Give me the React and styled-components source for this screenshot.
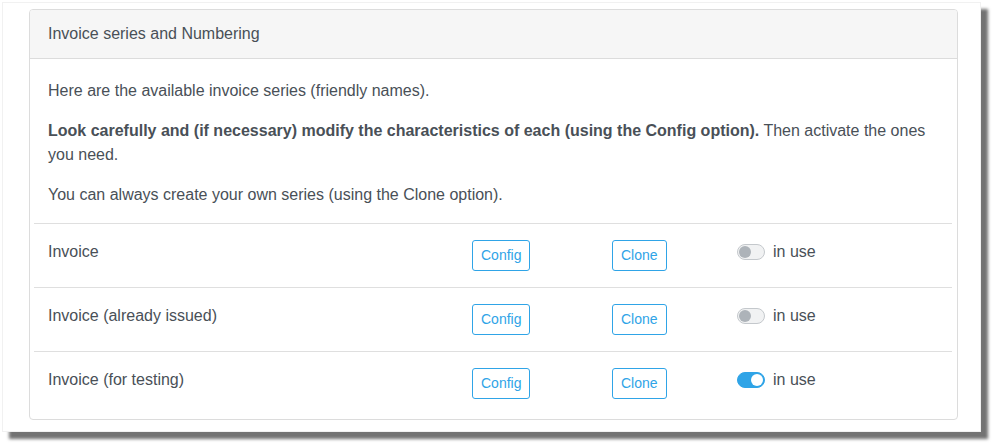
import React from "react";
import styled, { createGlobalStyle } from "styled-components";

const Global = createGlobalStyle`
  html, body { margin: 0; padding: 0; background: #fff; }
  body {
    font-family: "Liberation Sans", Arial, Helvetica, sans-serif;
    color: #495057;
    min-height: 443px;
  }
  * { box-sizing: border-box; }
`;

const Frame = styled.div`
  margin: 2px 0 11px 2px;
  width: 979px;
  height: 430px;
  background: #fff;
  border: 1px solid #f1f1f1;
  box-shadow: 7px 7px 3px rgba(0, 0, 0, 0.55);
  padding: 6px 0 0 26px;
`;

const Panel = styled.section`
  width: 929px;
  border: 1px solid #dcdcdc;
  border-radius: 4px;
  background: #fff;
  overflow: hidden;
`;

const Header = styled.header`
  background: #f6f6f6;
  border-bottom: 1px solid #dcdcdc;
  height: 49px;
  padding: 0 18px;
  display: flex;
  align-items: center;
  font-size: 16px;
  color: #495057;
`;

const Body = styled.div`
  padding: 20px 5px 4px 4px;
`;

const Para = styled.p`
  margin: 0 0 16px;
  padding: 0 14px;
  font-size: 16px;
  line-height: 24px;
  b { font-weight: bold; }
`;

const Row = styled.div`
  display: grid;
  grid-template-columns: 424px 140px 125px 1fr;
  border-top: 1px solid #dfdfdf;
`;

const Cell = styled.div`
  padding: 16px 14px;
  font-size: 16px;
  line-height: 24px;
  display: flex;
  align-items: flex-start;
  gap: 8px;
`;

const Btn = styled.button`
  font-family: inherit;
  font-size: 14px;
  line-height: 21px;
  padding: 4px 8px;
  background: #fff;
  color: #2fa4e7;
  border: 1px solid #2fa4e7;
  border-radius: 3px;
  cursor: pointer;
`;

const Toggle = styled.span`
  position: relative;
  display: inline-block;
  width: 28px;
  height: 16px;
  margin-top: 4px;
  border-radius: 8px;
  border: 1px solid ${(p) => (p.$on ? "#2fa4e7" : "#c4c8cc")};
  background: ${(p) => (p.$on ? "#2fa4e7" : "#f1f2f3")};
  &::after {
    content: "";
    position: absolute;
    top: 1px;
    left: ${(p) => (p.$on ? "13px" : "1px")};
    width: 12px;
    height: 12px;
    border-radius: 50%;
    background: ${(p) => (p.$on ? "#fff" : "#adb3b9")};
  }
`;

const series = [
  { name: "Invoice", on: false },
  { name: "Invoice (already issued)", on: false },
  { name: "Invoice (for testing)", on: true },
];

export default function App() {
  return (
    <>
      <Global />
      <Frame>
        <Panel>
          <Header>Invoice series and Numbering</Header>
          <Body>
            <Para>Here are the available invoice series (friendly names).</Para>
            <Para>
              <b>Look carefully and (if necessary) modify the characteristics of each (using the Config option).</b>{" "}
              Then activate the ones you need.
            </Para>
            <Para>You can always create your own series (using the Clone option).</Para>
            {series.map((s) => (
              <Row key={s.name}>
                <Cell>{s.name}</Cell>
                <Cell>
                  <Btn>Config</Btn>
                </Cell>
                <Cell>
                  <Btn>Clone</Btn>
                </Cell>
                <Cell>
                  <Toggle $on={s.on} />
                  <span>in use</span>
                </Cell>
              </Row>
            ))}
          </Body>
        </Panel>
      </Frame>
    </>
  );
}
